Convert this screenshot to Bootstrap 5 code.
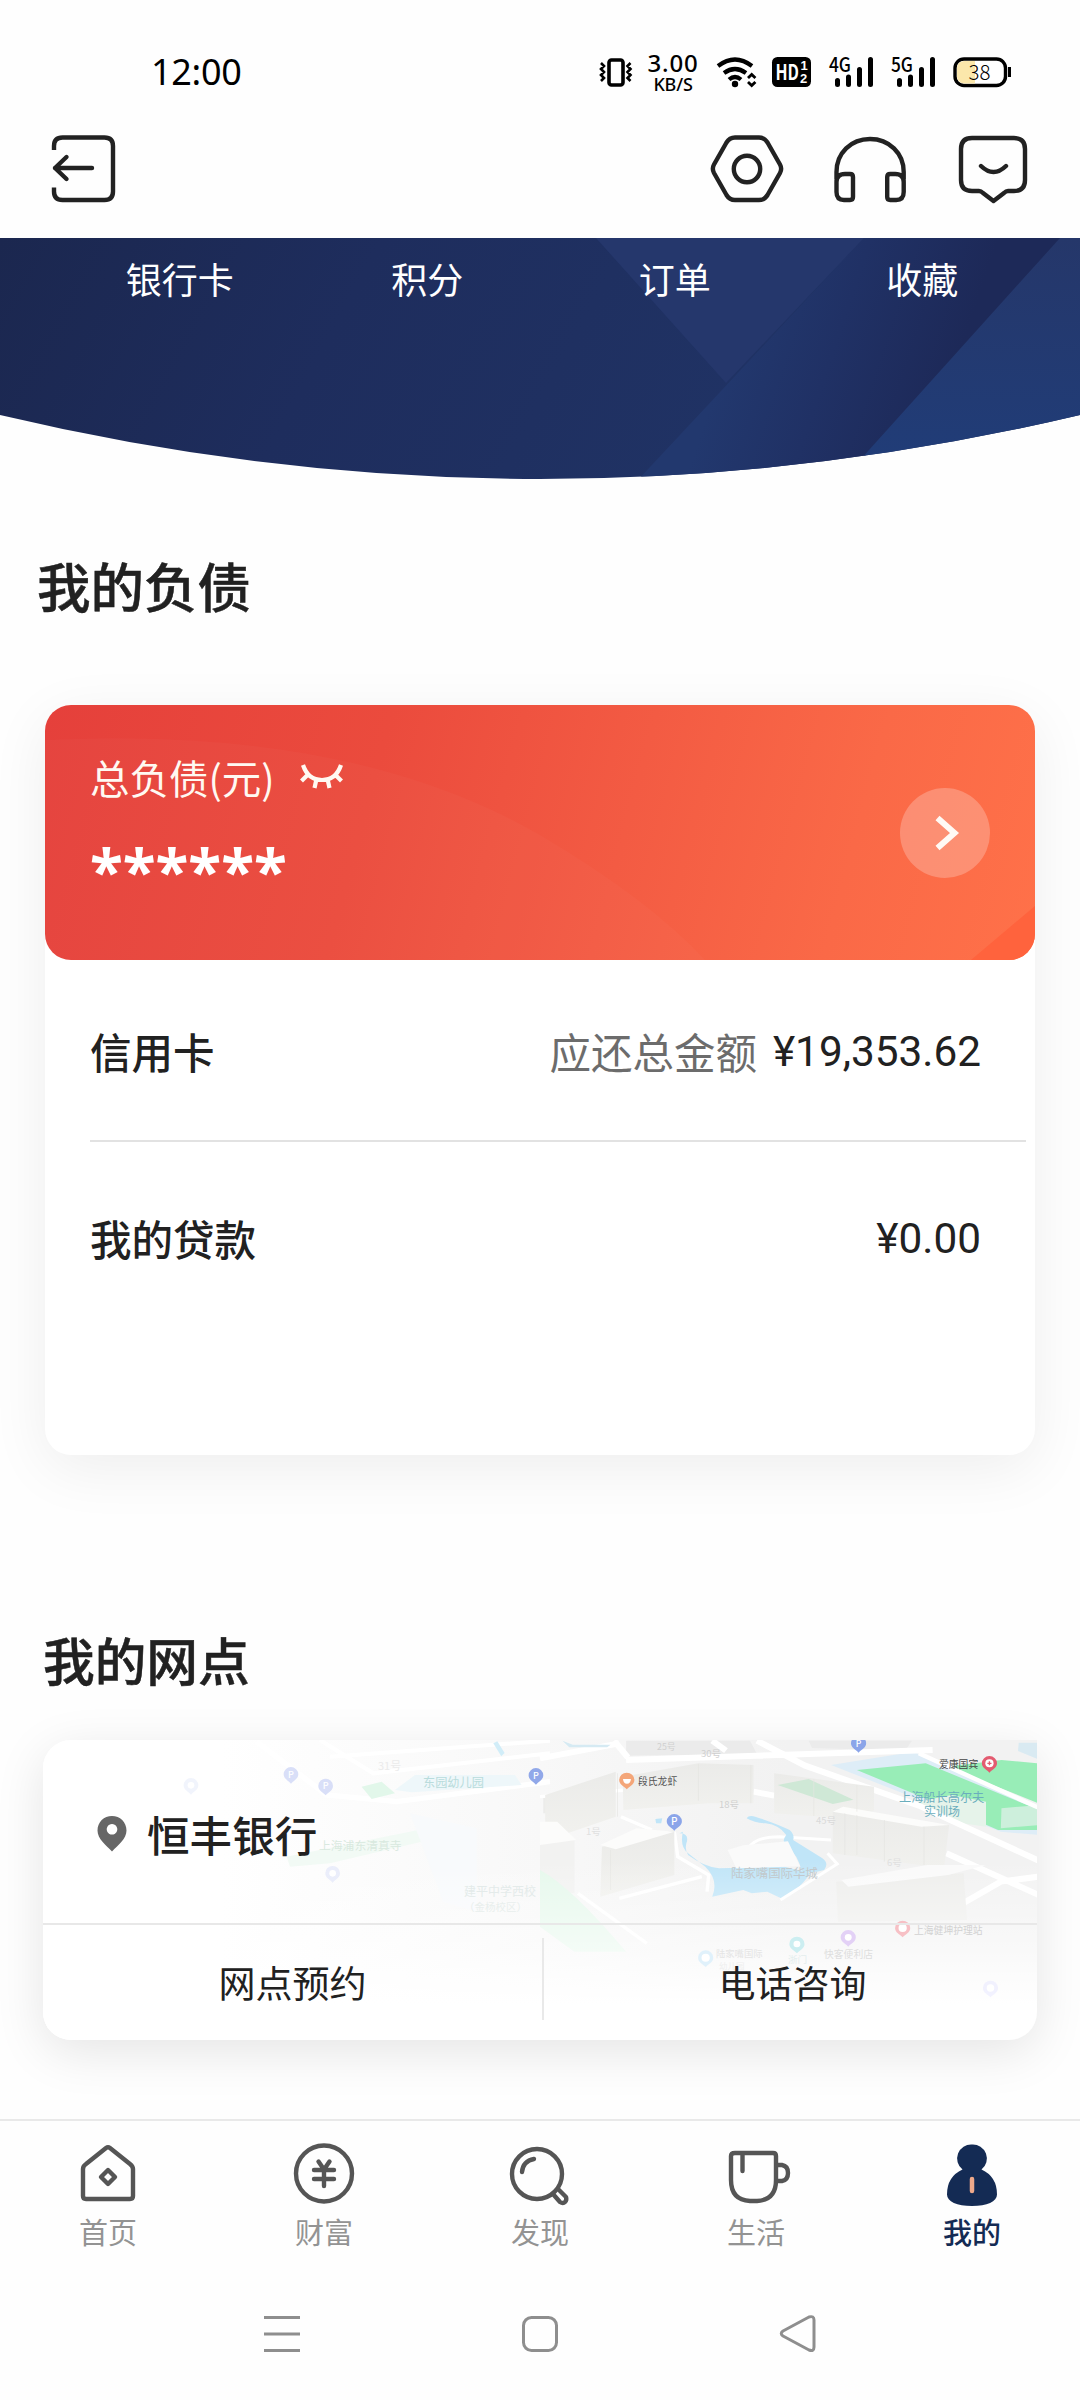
<!DOCTYPE html>
<html lang="zh-CN">
<head>
<meta charset="utf-8">
<meta name="viewport" content="width=device-width, initial-scale=1">
<title>我的</title>
<link href="https://cdn.jsdelivr.net/npm/bootstrap@5.3.0/dist/css/bootstrap.min.css" rel="stylesheet">
<style>
  body { width: 1080px; height: 2400px; overflow: hidden; background: #fefefe; color: #212121; font-family: "Noto Sans CJK SC", sans-serif; line-height: 1; }
  svg { display: block; flex: none; overflow: visible; }
  svg text { font-family: "Noto Sans CJK SC", sans-serif; }
  .line-icon { fill: none; stroke: #222; stroke-width: 4.4; stroke-linecap: round; stroke-linejoin: round; }
  .status-row { height: 100px; padding: 44px 69px 0 151px; color: #000; }
  .clock { font: 400 36px/56px "Noto Sans", sans-serif; letter-spacing: -.3px; }
  .speed { width: 54px; margin-right: 17px; margin-left: 14px; font-family: "Noto Sans", sans-serif; font-weight: 500; text-align: center; }
  .speed-num { font-size: 24px; line-height: 22px; letter-spacing: .8px; }
  .speed-unit { font-size: 18px; line-height: 20px; letter-spacing: -.2px; }
  .top-tools { height: 138px; padding: 35px 52px 0 51px; }
  .hero { height: 241px; }
  .hero-art { z-index: 0; }
  .hero-links { z-index: 1; padding: 20px 34px 0 56px; font-size: 36px; line-height: 40px; color: #fff; }
  .section-name { font-weight: 500; margin: 0; -webkit-text-stroke: .5px currentColor; }
  .debt-title { font-size: 53.5px; line-height: 64px; padding: 74px 0 0 37px; }
  .debt-card { margin: 88px 45px 0; height: 750px; border-radius: 26px; background: #fff; box-shadow: 0 14px 60px rgba(0,0,0,.065); }
  .total { height: 255px; border-radius: 26px; overflow: hidden; background: linear-gradient(105deg, #e5403b 0%, #eb4b3d 33%, #f35b43 58%, #fa6947 80%, #ff7149 100%); color: #fff9f2; }
  .total-body { z-index: 1; padding: 0 45px; }
  .total-label { font-size: 39.5px; line-height: 48px; }
  .stars { font: 700 60.5px/60px "Noto Sans", sans-serif; height: 60px; margin-top: 39px; color: #fff; }
  .total-text { padding-bottom: 12px; }
  .go { width: 90px; height: 90px; background: rgba(255,255,255,.24); }
  .debt-row { font-size: 41.5px; margin-left: 45px; padding-right: 54px; }
  .debt-row b { font-weight: 500; }
  .first-row { height: 180px; padding-top: 4px; }
  .second-row { height: 184px; padding-top: 10px; }
  .sep { height: 2px; background: #e2e2e2; margin: 0 9px 0 45px; }
  .due { color: #6c6c6c; margin-right: 16px; }
  .money { font-family: Roboto, sans-serif; font-size: 42.3px; }
  .branch-title { font-size: 51.7px; line-height: 60px; padding: 174px 0 0 43px; }
  .branch-card { margin: 51px 43px 0; height: 300px; border-radius: 28px 0 28px 28px; background: #fff; box-shadow: 0 12px 50px rgba(0,0,0,.1); }
  .map-art { border-radius: 28px 0 28px 28px; overflow: hidden; z-index: 0; }
  .branch-body { z-index: 1; }
  .branch-name { height: 183px; padding: 5px 0 0 54px; font-size: 42.6px; font-weight: 500; gap: 20px; }
  .branch-acts { height: 117px; border-top: 2px solid #e8e8e8; font-size: 37px; }
  .act-book { width: 499px; }
  .act-line { width: 2px; height: 82px; background: #e9e9e9; }
  .tabs { margin-top: 79px; height: 160px; border-top: 2px solid #e9e9e9; background: #fefefe; }
  .tab { padding-top: 20px; font-size: 29px; color: #939393; }
  .tab .line-icon { stroke: #555; }
  .tab span { line-height: 34px; margin-top: 5px; }
  .tab-on { color: #142b54; font-weight: 500; }
  .sys { height: 120px; padding: 34px 261px 0; }
  .sys svg { fill: none; stroke: #8e8e8e; stroke-width: 3; stroke-linejoin: round; }
</style>
<script src="https://cdn.jsdelivr.net/npm/bootstrap@5.3.0/dist/js/bootstrap.bundle.min.js"></script>
</head>
<body>

<div class="status-row d-flex justify-content-between align-items-start">
  <div class="clock">12:00</div>
  <div class="d-flex align-items-start">
    <svg class="mt-2" width="32" height="40" viewBox="601 52 32 40" fill="none" stroke="#000" stroke-width="3.6">
      <rect x="610" y="60" width="14" height="25" rx="2.5"/>
      <path stroke-width="2.6" d="M602 63l3 3-3 3 3 3-3 3 3 3-3 3M631.500 63l-3 3 3 3-3 3 3 3-3 3 3 3"/>
    </svg>
    <div class="speed pt-2"><div class="speed-num">3.00</div><div class="speed-unit">KB/S</div></div>
    <svg class="mt-2" width="294" height="40" viewBox="717 52 294 40">
      <g fill="none" stroke="#000" stroke-width="4.200">
        <path d="M718 66Q735 53 752 66M724 73Q735 65 746 73M729 79.500Q735 74.500 741 79.500"/>
      </g>
      <circle cx="735" cy="84" r="3.200"/>
      <path fill="none" stroke="#000" stroke-width="2.800" d="M748 78l3.700-3.600 3.700 3.600M748 82l3.700 3.600 3.700-3.600"/>
      <rect x="772" y="57" width="39" height="30" rx="5.500"/>
      <g fill="#fff" font-weight="700">
        <text x="775.500" y="79.500" font-size="21" textLength="23.500" lengthAdjust="spacingAndGlyphs">HD</text>
        <text x="800.500" y="70" font-size="13" style="font-family:'Liberation Sans',sans-serif">1</text><text x="800" y="82.500" font-size="13" style="font-family:'Liberation Sans',sans-serif">2</text>
      </g>
      <g font-weight="500" font-size="19.500">
        <text x="829" y="71.500" textLength="22" lengthAdjust="spacingAndGlyphs">4G</text>
        <text x="891" y="71.500" textLength="22" lengthAdjust="spacingAndGlyphs">5G</text>
      </g>
      <g stroke="#000" stroke-width="5" stroke-linecap="round">
        <path d="M837.500 80.500v4M848.500 77v7.500M859.500 69.500v15M870.500 59.500v25M899.500 80.500v4M910.500 77v7.500M921.500 69.500v15M932.500 59.500v25"/>
      </g>
      <rect x="955" y="59" width="50.500" height="26.500" rx="9" fill="#fff" stroke="#000" stroke-width="3.400"/>
      <path d="M964 61h11v22.500h-11q-7-1-7-7v-8.500q0-6 7-7z" fill="#fbe7ab"/>
      <path d="M1009.500 67v10" stroke="#000" stroke-width="3"/>
      <text x="968.500" y="79.500" font-size="20.500" font-weight="300">38</text>
    </svg>
  </div>
</div>

<div class="top-tools d-flex justify-content-between align-items-start">
  <svg class="line-icon" width="65" height="68" viewBox="51 136 65 68">
    <path d="M54 151v-4q0-8.500 8.500-8.500h42q8.500 0 8.500 8.500v45.500q0 8.500-8.500 8.500h-42q-8.500 0-8.500-8.500v-4" stroke-linecap="butt"/>
    <path d="M92 169H55M66.500 158L55 169l11.500 11"/>
  </svg>
  <svg class="line-icon" width="317" height="68" viewBox="711 135 317 68">
    <path d="M735 137.500h24q5.500 0 8.500 5l12.500 22q2.300 4.300 0 8.500l-12.500 22q-3 5-8.500 5h-24q-5.500 0-8.500-5l-12.500-22q-2.300-4.300 0-8.500l12.500-22q3-5 8.500-5z"/>
    <circle cx="747" cy="169" r="13.200"/>
    <path d="M836.500 179v-7C836.500 153 851 139 870 139s33.700 14 33.700 33v7M836.500 182q0-8 8.500-8h5q3 0 3 3v20q0 3-3 3h-6q-7.500 0-7.500-8zM903.700 182q0-8-8.500-8h-5q-3 0-3 3v20q0 3 3 3h6q7.500 0 7.500-8z"/>
    <path d="M972 138h42q11 0 11 11v31q0 11-11 11h-6q-2 0-4 2l-10.500 8-10.500-8q-2-2-4-2h-7q-11 0-11-11v-31q0-11 11-11zM981 166q12.500 12 25 0"/>
  </svg>
</div>

<div class="hero position-relative">
  <svg class="hero-art position-absolute top-0 start-0" width="1080" height="242" viewBox="0 238 1080 242">
    <defs>
      <linearGradient id="navy" x2="1" y2=".12"><stop stop-color="#1b274f"/><stop offset=".35" stop-color="#1e2d5d"/><stop offset=".8" stop-color="#203365"/><stop offset="1" stop-color="#1d2a57"/></linearGradient>
      <linearGradient id="band" gradientUnits="userSpaceOnUse" x1="735" y1="330" x2="945" y2="400"><stop stop-color="#22386e"/><stop offset=".45" stop-color="#203165"/><stop offset="1" stop-color="#1d2958"/></linearGradient>
      <linearGradient id="right" x2="0" y2="1"><stop stop-color="#25376a"/><stop offset="1" stop-color="#203d79"/></linearGradient>
      <clipPath id="bowl"><path d="M0 238H1080V415Q540 543 0 415Z"/></clipPath>
    </defs>
    <g clip-path="url(#bowl)">
      <path d="M0 238h1080v242H0z" fill="url(#navy)"/>
      <path d="M596 238h268L726 383z" fill="#25376c"/>
      <path d="M864 238h196L842 482H636z" fill="url(#band)"/>
      <path d="M1060 238h20v242H842z" fill="url(#right)"/>
    </g>
  </svg>
  <div class="hero-links position-relative row g-0 text-center">
    <div class="col-3">银行卡</div><div class="col-3">积分</div><div class="col-3">订单</div><div class="col-3">收藏</div>
  </div>
</div>

<h2 class="section-name debt-title">我的负债</h2>

<div class="debt-card">
  <div class="total position-relative d-flex">
    <svg class="position-absolute top-0 start-0" width="990" height="255" viewBox="45 705 990 255">
      <path d="M45 740Q350 725 540 835Q650 900 705 960H45z" fill="#fff" opacity=".022"/>
      <path d="M971 960l64-54v54z" fill="#ff633d"/>
    </svg>
    <div class="total-body position-relative d-flex flex-grow-1 justify-content-between align-items-center">
      <div class="total-text">
        <div class="d-flex align-items-center">
          <span class="total-label">总负债(元)</span>
          <svg class="ms-4" width="44" height="26" viewBox="298 766 44 26" fill="none" stroke="#fff9f2" stroke-width="4.200"><path d="M302 767q5 15 19 15t19-15M306.500 777l-6 6M334.500 777l6 6M315.500 781l-2 9M326.500 781l2 9"/></svg>
        </div>
        <div class="stars">******</div>
      </div>
      <div class="go rounded-circle d-flex align-items-center justify-content-center">
        <svg width="24" height="36" viewBox="934.500 814 24 36" fill="none" stroke="#fffaf5" stroke-width="6"><path d="M939 817l17 15-17 15"/></svg>
      </div>
    </div>
  </div>
  <div class="debt-row first-row d-flex align-items-center justify-content-between">
    <b>信用卡</b><div class="d-flex align-items-center"><span class="due">应还总金额</span><span class="money">¥19,353.62</span></div>
  </div>
  <div class="sep"></div>
  <div class="debt-row second-row d-flex align-items-center justify-content-between">
    <b>我的贷款</b><span class="money">¥0.00</span>
  </div>
</div>

<h2 class="section-name branch-title">我的网点</h2>

<div class="branch-card position-relative">
  <svg class="map-art position-absolute top-0 start-0" width="994" height="300" viewBox="43 1740 994 300">
    <defs>
      <linearGradient id="ground" x2="1" y2="0"><stop offset=".18" stop-color="#fff"/><stop offset=".5" stop-color="#f8f8f8"/><stop offset=".75" stop-color="#f2f2f2"/></linearGradient>
      <linearGradient id="fade" x2="0" y2="1"><stop offset=".1" stop-color="#fff" stop-opacity="0"/><stop offset=".55" stop-color="#fff" stop-opacity=".55"/><stop offset=".82" stop-color="#fff"/></linearGradient>
      <linearGradient id="wall" x2="0" y2="1"><stop stop-color="#ebebe9"/><stop offset="1" stop-color="#f1f1ee"/></linearGradient>
      <g id="drop"><path d="M-22 0a22 22 0 1 1 44 0c0 13-12 17-22 28c-10-11-22-15-22-28z"/></g>
    </defs>
    <path d="M43 1740h994v300H43z" fill="url(#ground)"/>
    <!-- western blocks -->
    <g transform="translate(30 1600) scale(.3333)">
      <path d="M680 425l210 160 210 20 460-60" fill="none" stroke="#fff" stroke-width="16"/>
      <path d="M870 420l160 100 530-60M900 470l660-48" fill="none" stroke="#fff" stroke-width="12"/>
      <path d="M995 560l60-15 40 35-70 17z" fill="#e2f7ea"/>
      <path d="M1095 570l60-45 300 0 20 30-330 22z" fill="#eef7fa"/>
      <path d="M770 770l420-85 30 30-320 75-120 10z" fill="#f2faf5"/>
      <path d="M1390 430l12-6 22 35-10 10z" fill="#d1edf8"/>
      <path d="M1140 640l200 45v250l-100-30z" fill="#f8fafc"/>
      <path d="M1540 590h20v50h-20z" fill="#ececea"/>
    </g>
    <!-- eastern blocks -->
    <g transform="translate(540 1720) scale(.3444 .3333)">
      <path d="M780 62h300l-20 30-270-8zM250 62h360l20 40-380 5z" fill="#ebebeb"/>
      <path d="M845 135l240-40 363 170v80l-110-10z" fill="#deedf7"/>
      <path d="M920 150l200-20 330 140v60h-120L1130 240z" fill="#98edb7"/>
      <path d="M1180 140l160-20 108 10v120z" fill="#98edb7"/>
      <path d="M1075 250l120-25 100 20v75l-100-15z" fill="#e6f3ea"/>
      <path d="M1340 265l108-10v60l-110 10z" fill="#cdefdc"/>
      <path d="M1390 68h58v50l-60-25z" fill="#d9eaf2"/>
      <g fill="none" stroke="#fff" stroke-width="18">
        <path d="M0 115l230-45M215 62l40 50M500 62l40 30M250 120L1140 90M630 62l140 75 330 120 348 165M620 215l60 12M1180 400l268 125M1448 470l-110 15-110 65"/>
        <path d="M1100 100l345 162" stroke-width="13"/>
        <path d="M0 230l250-20M235 290l90 40M390 335l10 75 90 55-5 50M110 520l200 150M230 535l240-65" stroke-width="10"/>
        <path d="M605 385q20-35 90-35l150 10" stroke-width="9"/>
      </g>
      <path d="M15 225l205-70v135l-140 50-65-35z" fill="url(#wall)"/>
      <path d="M240 170l220-40 160 5v115H490l-248 20z" fill="url(#wall)"/>
      <path d="M680 160l290 40v70l-20 30-270-20z" fill="url(#wall)"/>
      <path d="M690 195l90-18 130 62-60 13z" fill="#cfe8d6"/>
      <path d="M850 275l338 40-15 130-323-45z" fill="url(#wall)"/>
      <path d="M0 360l100 0v160H0z" fill="#f2f2f1"/>
      <path d="M180 380l210-50v135l-215 65z" fill="url(#wall)"/>
      <path d="M0 305h50l55 55-105 15zM175 375l105-50 110 10-170 53zM850 275l30-15 308 55-80 5z" fill="#fcfcfb"/>
      <path d="M0 450q90 50 250 245H100L0 620z" fill="#e6f8ec"/>
      <path d="M860 485l370-25 10 140-375 5z" fill="#eeeeec"/>
      <path d="M875 480l250-45h170l-110 30-290 35z" fill="#fafafa"/>
      <g stroke="#e4e4e1" stroke-width="2"><path d="M460 132v110M612 135v115M795 178v110M920 195v80M885 280v125M920 285v120M1000 300v125M1115 320v115M205 390v120M225 160v130"/></g>
      <path d="M405 340q30 0 20 30-5 20 5 35 45 35 90 40l190-5 75 20q-40 60-85 75l-40-20-45 5-25-10-90 20q20-50-20-90l-50-40q-25-20-15-65zM600 295q5-10 25-5 60 20 100 40 15 15 10 30l85 55q20 15 5 35-30 10-65 5-10-50-45-80-15-10 0-30-20-30-60-35-30 0-55-15zM335 297l20-2-3 15-15 0z" fill="#c0e5f8"/>
      <path d="M545 390l45-14 130-12 35 75-185 6z" fill="#fafafa"/>
      <path d="M835 400l28 32-165 108" fill="none" stroke="#fff" stroke-width="9"/>
      <path d="M65 62l30 12h110l-10 8H85z" fill="#d5eaf3"/>
    </g>
    <path d="M43 1840h994v200H43z" fill="url(#fade)"/>
    <!-- pins -->
    <g transform="translate(30 1600) scale(.3333)">
      <g fill="#c9d2f5"><use href="#drop" x="783" y="523" opacity=".7"/><use href="#drop" x="887" y="558" opacity=".7"/><use href="#drop" x="908" y="820" opacity=".35"/><use href="#drop" x="483" y="556" opacity=".25"/></g>
      <use href="#drop" x="1518" y="526" fill="#91a8e9"/>
      <g fill="#fff" font-size="27" font-weight="500" text-anchor="middle"><text x="783" y="533">P</text><text x="887" y="568">P</text><text x="1518" y="536">P</text></g>
      <circle cx="483" cy="556" r="10" fill="#fff"/><circle cx="908" cy="820" r="10" fill="#fff"/>
    </g>
    <g transform="translate(540 1720) scale(.3444 .3333)">
      <use href="#drop" x="925" y="70" fill="#8ba5e9"/>
      <use href="#drop" x="390" y="304" fill="#8ba5e9"/>
      <use href="#drop" x="252" y="180" fill="#f4a679"/>
      <use href="#drop" x="1305" y="130" fill="#e35b70"/>
      <use href="#drop" x="1053" y="624" fill="#f7c0c5"/>
      <use href="#drop" x="895" y="652" fill="#e3d1f6"/>
      <use href="#drop" x="746" y="672" fill="#cceef1"/>
      <use href="#drop" x="481" y="713" fill="#d9effb" opacity=".8"/>
      <use href="#drop" x="1308" y="804" fill="#e9eaff" opacity=".6"/>
      <g fill="#fff"><path d="M241 177h23q-1 14-11.500 14t-11.500-14z"/><circle cx="1305" cy="130" r="12"/><circle cx="1053" cy="624" r="12"/><circle cx="895" cy="652" r="10"/><circle cx="746" cy="672" r="10"/><circle cx="481" cy="713" r="12"/><circle cx="1308" cy="804" r="11"/></g>
      <path d="M1305 124v12M1299 130h12" stroke="#e35b70" stroke-width="4"/>
      <g fill="#fff" font-size="29" font-weight="500" text-anchor="middle"><text x="925" y="82" font-size="25">P</text><text x="390" y="315">P</text></g>
    </g>
    <!-- place names -->
    <g font-size="9.500">
      <text x="423" y="1786.500" font-size="12.200" fill="#b9dcdc">东园幼儿园</text>
      <text x="319" y="1850" font-size="11.800" fill="#d9e9df">上海浦东清真寺</text>
      <text x="464" y="1896" font-size="12" fill="#e4ebea">建平中学西校</text>
      <text x="464" y="1911" font-size="10.500" fill="#e9efed">（金杨校区）</text>
      <text x="378" y="1770" font-size="11" fill="#ebebeb">31号</text>
      <text x="638" y="1785" font-size="9.800" fill="#555">段氏龙虾</text>
      <text x="939" y="1768" font-size="9.800" fill="#444">爱康国宾</text>
      <text x="899" y="1802" font-size="12.200" fill="#6baebd">上海船长高尔夫</text>
      <text x="924" y="1816" font-size="12" fill="#6baebd">实训场</text>
      <text x="731" y="1878" font-size="12.400" fill="#c2c9cc">陆家嘴国际华城</text>
      <text x="914" y="1934" font-size="9.800" fill="#d2d2d2">上海健坤护理站</text>
      <text x="824" y="1958" font-size="9.800" fill="#dedede">快客便利店</text>
      <text x="716" y="1956.500" font-size="9.300" fill="#e5e5e5">陆家嘴国际</text>
      <text x="719" y="1969" font-size="8.500" fill="#efefef">幼儿园</text>
      <text x="788" y="1963" font-size="9.600" fill="#e4eeee">浙门</text>
      <g fill="#d0d0d0"><text x="657" y="1750" font-size="8.800">25号</text><text x="701" y="1757">30号</text><text x="719" y="1808">18号</text><text x="816" y="1824" fill="#dadada">45号</text><text x="586" y="1835" fill="#e0e0e0">1号</text><text x="887" y="1866" fill="#e0e0e0">6号</text></g>
    </g>
  </svg>
  <div class="branch-body position-relative">
    <div class="branch-name d-flex align-items-center">
      <svg width="30" height="36" viewBox="97.500 1818 30 36"><path fill="#666" fill-rule="evenodd" d="M112.500 1818c8 0 14.500 6 14.500 14.500 0 8.500-8.500 14.500-14.500 21-6-6.500-14.500-12.500-14.500-21 0-8.500 6.500-14.500 14.500-14.500zm0 8a5.300 5.300 0 1 0 .01 0z"/></svg>
      <span>恒丰银行</span>
    </div>
    <div class="branch-acts d-flex align-items-center text-center">
      <div class="act-book">网点预约</div><div class="act-line mb-2"></div><div class="col ps-1">电话咨询</div>
    </div>
  </div>
</div>

<div class="tabs d-flex">
  <div class="tab col d-flex flex-column align-items-center">
    <svg class="line-icon" width="64" height="68" viewBox="76 2140 64 68"><path d="M106 2147q2-1.500 4 0l20 16q3 2.500 3 5v27q0 3-3 3H86q-3 0-3-3v-27q0-3 3-5zM108 2169l7 7-7 7-7-7z"/></svg>
    <span>首页</span>
  </div>
  <div class="tab col d-flex flex-column align-items-center">
    <svg class="line-icon" width="64" height="68" viewBox="292 2140 64 68"><circle cx="324" cy="2172.500" r="28"/><path d="M318.500 2160.500l5.500 8 5.500-8M314 2169h20M314 2178h20M324 2169v16"/></svg>
    <span>财富</span>
  </div>
  <div class="tab col d-flex flex-column align-items-center">
    <svg class="line-icon" width="64" height="68" viewBox="508 2140 64 68"><circle cx="537" cy="2173" r="25"/><path d="M522 2171q1-11 12-13M553 2193l7 8q3 2 5 0t1-5l-8-8"/></svg>
    <span>发现</span>
  </div>
  <div class="tab col d-flex flex-column align-items-center">
    <svg class="line-icon" width="64" height="68" viewBox="724 2140 64 68"><path d="M735 2152h38q3 0 3 3v24q0 20-19 21h-7q-19-1-19-21v-24q0-3 4-3zM742.500 2152v18M777 2164h5q6 1 6 8t-6 8h-5"/></svg>
    <span>生活</span>
  </div>
  <div class="tab tab-on col d-flex flex-column align-items-center">
    <svg width="64" height="68" viewBox="940 2140 64 68"><path fill="#142b54" d="M972 2143.500a14 14 0 0 1 9.500 25q15.500 7 15.500 25c0 7-10 11.500-25 11.500s-25-4.500-25-11.500q0-18 15.500-25a14 14 0 0 1 9.500-25z"/><path d="M972 2178v12" stroke="#eea98b" stroke-width="4.500" stroke-linecap="round"/></svg>
    <span>我的</span>
  </div>
</div>

<div class="sys d-flex justify-content-between">
  <svg width="42" height="42" viewBox="261 2313 42 42"><path d="M264 2317.500h36M264 2334h36M264 2350.500h36"/></svg>
  <svg width="42" height="42" viewBox="519 2313 42 42"><rect x="523.500" y="2317.500" width="33" height="33" rx="8"/></svg>
  <svg width="42" height="42" viewBox="777 2313 42 42"><path d="M783 2331l26-14q5-1.500 5 3v27q0 5-5 3l-26-14q-3.500-2.500 0-5z"/></svg>
</div>
</body>
</html>
